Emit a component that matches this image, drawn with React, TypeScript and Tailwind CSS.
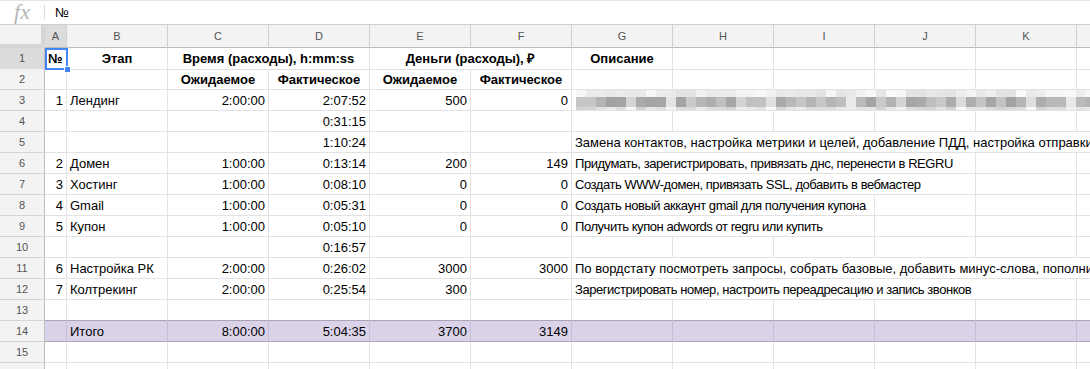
import React from "react";

type Cell = {
  t?: string;
  al?: "l" | "r" | "c";
  b?: boolean;
  span?: number;
  sel?: boolean;
  blur?: boolean;
  tight?: boolean;
};

const SPAN: Record<number, string> = {
  1: "",
  2: "col-span-2",
  3: "col-span-3",
  4: "col-span-4",
  5: "col-span-5",
  6: "col-span-6",
};

const GRID = "grid grid-cols-[45px_22px_repeat(11,101px)]";

function fill(cells: Cell[]): Cell[] {
  const used = cells.reduce((s, c) => s + (c.span ?? 1), 0);
  const out = [...cells];
  for (let i = used; i < 12; i++) out.push({});
  return out;
}

const r = (t: string): Cell => ({ t, al: "r" });
const l = (t: string, span = 1, tight = false): Cell => ({ t, al: "l", span, tight });
const e: Cell = {};

const ROWS: Cell[][] = [
  fill([
    { t: "№", al: "l", b: true, sel: true },
    { t: "Этап", al: "c", b: true },
    { t: "Время (расходы), h:mm:ss", al: "c", b: true, span: 2 },
    { t: "Деньги (расходы), ₽", al: "c", b: true, span: 2 },
    { t: "Описание", al: "c", b: true },
  ]),
  fill([
    e,
    e,
    { t: "Ожидаемое", al: "c", b: true },
    { t: "Фактическое", al: "c", b: true },
    { t: "Ожидаемое", al: "c", b: true },
    { t: "Фактическое", al: "c", b: true },
  ]),
  fill([r("1"), l("Лендинг"), r("2:00:00"), r("2:07:52"), r("500"), r("0"), { blur: true, span: 6 }]),
  fill([e, e, e, r("0:31:15")]),
  fill([
    e,
    e,
    e,
    r("1:10:24"),
    e,
    e,
    l("Замена контактов, настройка метрики и целей, добавление ПДД, настройка отправки писем", 6),
  ]),
  fill([r("2"), l("Домен"), r("1:00:00"), r("0:13:14"), r("200"), r("149"), l("Придумать, зарегистрировать, привязать днс, перенести в REGRU", 4, true)]),
  fill([r("3"), l("Хостинг"), r("1:00:00"), r("0:08:10"), r("0"), r("0"), l("Создать WWW-домен, привязать SSL, добавить в вебмастер", 4, true)]),
  fill([r("4"), l("Gmail"), r("1:00:00"), r("0:05:31"), r("0"), r("0"), l("Создать новый аккаунт gmail для получения купона", 3, true)]),
  fill([r("5"), l("Купон"), r("1:00:00"), r("0:05:10"), r("0"), r("0"), l("Получить купон adwords от regru или купить", 3, true)]),
  fill([e, e, e, r("0:16:57")]),
  fill([
    r("6"),
    l("Настройка РК"),
    r("2:00:00"),
    r("0:26:02"),
    r("3000"),
    r("3000"),
    l("По вордстату посмотреть запросы, собрать базовые, добавить минус-слова, пополнить баланс", 6),
  ]),
  fill([r("7"), l("Колтрекинг"), r("2:00:00"), r("0:25:54"), r("300"), e, l("Зарегистрировать номер, настроить переадресацию и запись звонков", 5, true)]),
  fill([]),
  fill([e, l("Итого"), r("8:00:00"), r("5:04:35"), r("3700"), r("3149")]),
  fill([]),
  fill([]),
];

const LETTERS = ["A", "B", "C", "D", "E", "F", "G", "H", "I", "J", "K", ""];

function seeded(seed: number) {
  let s = seed;
  return () => {
    s = (s * 9301 + 49297) % 233280;
    return s / 233280;
  };
}

function blurBlocks() {
  const rnd = seeded(17);
  const words = [5, 3, 6, 2, 7, 4, 5, 6, 3, 5, 4, 6, 3, 7, 2, 5];
  const mids: boolean[] = [];
  let wi = 0;
  while (mids.length < 64) {
    const len = words[wi % words.length];
    for (let i = 0; i < len; i++) mids.push(true);
    mids.push(false);
    wi++;
  }
  return mids.slice(0, 62).map((isWord) => {
    const top = Math.round(226 + rnd() * 24);
    const mid = isWord ? Math.round(156 + rnd() * 46) : Math.round(210 + rnd() * 26);
    const bot = Math.round(isWord ? 210 + rnd() * 26 : 235 + rnd() * 15);
    const g = (v: number) => `rgb(${v},${v},${v + 3})`;
    return { top: g(top), mid: g(mid), bot: g(bot) };
  });
}

const BLOCKS = blurBlocks();

function Blur() {
  return (
    <div className="flex pl-[4px] h-full">
      {BLOCKS.map((b, i) => (
        <div key={i} className="flex flex-col w-[10px] shrink-0">
          <div className="h-[7px]" style={{ backgroundColor: b.top }} />
          <div className="h-[10px]" style={{ backgroundColor: b.mid }} />
          <div className="h-[3px]" style={{ backgroundColor: b.bot }} />
        </div>
      ))}
    </div>
  );
}

export default function App() {
  return (
    <div
      className="w-[1090px] h-[369px] overflow-hidden bg-white text-black"
      style={{ fontFamily: '"Liberation Sans", Arial, sans-serif' }}
    >
      {/* formula bar */}
      <div className="flex items-center h-[25px] border-t border-b border-t-[#e3e3e3] border-b-[#cfcfcf]">
        <div className="w-[44px] flex justify-center">
          <span
            className="italic text-[22px] leading-none text-[#b5b5b5] -mt-[2px]"
            style={{ fontFamily: '"Liberation Serif", "DejaVu Serif", serif' }}
          >
            fx
          </span>
        </div>
        <div className="w-px h-[15px] bg-[#dcdcdc]" />
        <div className="pl-[10px] text-[13px]">№</div>
      </div>

      {/* column headers */}
      <div className={`${GRID} h-[23px]`}>
        <div className="bg-[#f3f3f3] border-r-[4px] border-b-[4px] border-[#d6d6d6]" />
        {LETTERS.map((L, i) => (
          <div
            key={i}
            className={`flex items-center justify-center text-[11px] text-[#555] border-r border-b border-r-[#d0d0d0] border-b-[#bdbdbd] ${
              i === 0 ? "bg-[#dcdcdc]" : "bg-[#f3f3f3]"
            }`}
          >
            {L}
          </div>
        ))}
      </div>

      {/* rows */}
      {ROWS.map((cells, ri) => {
        const purple = ri === 13;
        const above = ri === 12;
        return (
          <div key={ri} className={`${GRID} h-[21px]`}>
            <div
              className={`flex items-center justify-center text-[11px] text-[#555] border-r border-b border-r-[#bdbdbd] border-b-[#d6d6d6] ${
                ri === 0 ? "bg-[#dcdcdc]" : "bg-[#f3f3f3]"
              }`}
            >
              {ri < 15 ? ri + 1 : ""}
            </div>
            {cells.map((c, ci) => {
              const span = c.span ?? 1;
              const align =
                c.al === "r" ? "justify-end" : c.al === "c" ? "justify-center" : "justify-start";
              const bb = purple || above ? "border-b-[#a9a4b6]" : "border-b-[#e2e2e2]";
              const br = purple ? "border-r-[#c6bed8]" : "border-r-[#e2e2e2]";
              return (
                <div
                  key={ci}
                  className={`relative flex items-center ${align} ${SPAN[span]} border-r border-b ${bb} ${br} ${
                    purple ? "bg-[#d9d2e9]" : ""
                  } ${c.blur ? "" : "px-[3px]"} text-[13px] whitespace-nowrap ${
                    c.sel ? "overflow-visible z-10" : "overflow-hidden"
                  } ${c.b ? "font-bold" : ""} ${c.tight ? "tracking-[-0.45px]" : ""}`}
                >
                  {c.blur ? <Blur /> : <span className="pt-px">{c.t}</span>}
                  {c.sel && (
                    <div className="absolute left-0 top-0 w-[23px] h-[22px] border-2 border-[#4285f4] pointer-events-none">
                      <div className="absolute right-[-5px] bottom-[-5px] w-[7px] h-[7px] bg-[#4285f4] border border-white" />
                    </div>
                  )}
                </div>
              );
            })}
          </div>
        );
      })}
    </div>
  );
}
